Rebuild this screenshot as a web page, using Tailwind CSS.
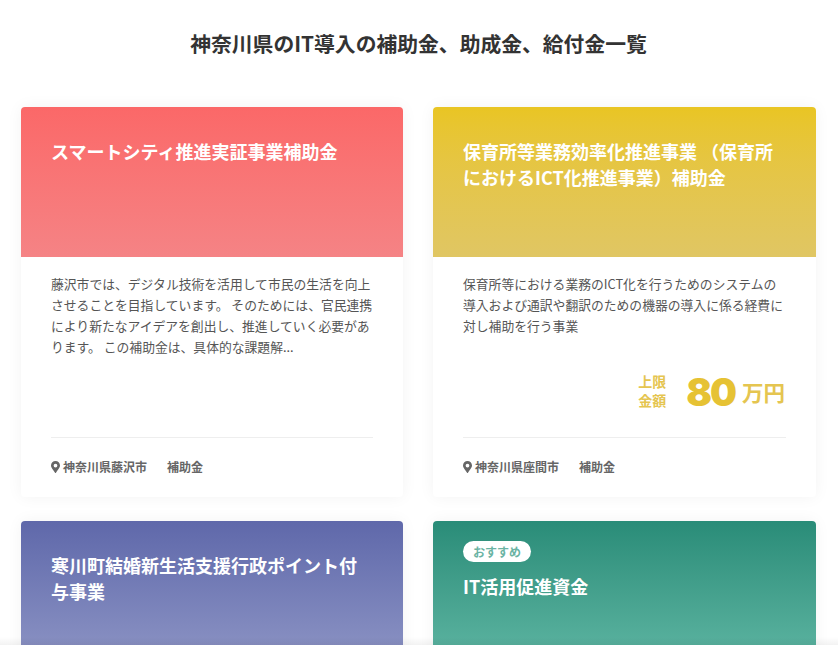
<!DOCTYPE html>
<html lang="ja">
<head>
    <meta charset="UTF-8">
    <meta name="viewport" content="width=device-width, initial-scale=1.0">
    <title>神奈川県のIT導入の補助金、助成金、給付金一覧</title>
    <script src="https://cdn.jsdelivr.net/npm/@tailwindcss/browser@4"></script>
</head>
<body class="h-[645px] overflow-hidden bg-white font-['Noto_Sans_CJK_JP','Noto_Sans',sans-serif] text-[#333]">
    <main class="relative h-[645px] overflow-hidden px-[21px]">
        <h1 class="h-[107px] pt-[28px] pr-[1px] text-center text-[20.8px] leading-[30px] font-bold">神奈川県のIT導入の補助金、助成金、給付金一覧</h1>

        <div class="grid w-[795px] grid-cols-[382px_383px] gap-x-[30px] gap-y-[24px]">
            <!-- card 1 -->
            <article class="flex h-[390px] flex-col rounded bg-white shadow-[0_0_16px_rgba(0,0,0,0.05)]">
                <div class="h-[150px] rounded-t bg-gradient-to-b from-[#fb6868] to-[#f58385] px-[30px] pt-[31px]">
                    <h2 class="text-[18px] leading-[26px] font-bold text-white">スマートシティ推進実証事業補助金</h2>
                </div>
                <div class="flex flex-1 flex-col px-[30px] pt-[16px]">
                    <p class="h-[164px] text-[12.8px] leading-[21px] text-[#555]">藤沢市では、デジタル技術を活用して市民の生活を向上させることを目指しています。 そのためには、官民連携により新たなアイデアを創出し、推進していく必要があります。 この補助金は、具体的な課題解...</p>
                    <div class="flex items-center border-t border-[#eee] pt-[19px] text-[12px] leading-[20px] font-bold text-[#666]">
                        <svg class="mr-[3px] h-[12px] w-[9px] fill-[#666]" viewBox="0 0 384 512"><path d="M172 502C27 291 0 256 0 192 0 86 86 0 192 0s192 86 192 192c0 64-27 99-172 310-10 14-30 14-40 0zm20-230a80 80 0 1 0 0-160 80 80 0 0 0 0 160z"/></svg>
                        <span>神奈川県藤沢市</span>
                        <span class="ml-[20px]">補助金</span>
                    </div>
                </div>
            </article>

            <!-- card 2 -->
            <article class="flex h-[390px] flex-col rounded bg-white shadow-[0_0_16px_rgba(0,0,0,0.05)]">
                <div class="h-[150px] rounded-t bg-gradient-to-b from-[#e9c523] to-[#e0c663] px-[30px] pt-[31px]">
                    <h2 class="text-[18px] leading-[26px] font-bold text-white">保育所等業務効率化推進事業 （保育所におけるICT化推進事業）補助金</h2>
                </div>
                <div class="flex flex-1 flex-col px-[30px] pt-[16px]">
                    <p class="h-[94px] text-[12.8px] leading-[21px] text-[#555]">保育所等における業務のICT化を行うためのシステムの導入および通訳や翻訳のための機器の導入に係る経費に対し補助を行う事業</p>
                    <div class="flex h-[70px] items-start justify-end pr-[1px] text-[#e6c234]">
                        <div class="mt-[5px] mr-[20px] text-[14px] leading-[19px] font-bold text-[#e5c550]">上限<br>金額</div>
                        <div class="mt-[6px] flex items-center">
                            <span class="font-['Inter',sans-serif] text-[38px] leading-[38px] font-black tracking-[-2px]">80</span>
                            <span class="ml-[7px] text-[21.5px] leading-[38px] font-bold text-[#e5c550]">万円</span>
                        </div>
                    </div>
                    <div class="flex items-center border-t border-[#eee] pt-[19px] text-[12px] leading-[20px] font-bold text-[#666]">
                        <svg class="mr-[3px] h-[12px] w-[9px] fill-[#666]" viewBox="0 0 384 512"><path d="M172 502C27 291 0 256 0 192 0 86 86 0 192 0s192 86 192 192c0 64-27 99-172 310-10 14-30 14-40 0zm20-230a80 80 0 1 0 0-160 80 80 0 0 0 0 160z"/></svg>
                        <span>神奈川県座間市</span>
                        <span class="ml-[20px]">補助金</span>
                    </div>
                </div>
            </article>

            <!-- card 3 -->
            <article class="flex h-[390px] flex-col rounded bg-white shadow-[0_0_16px_rgba(0,0,0,0.05)]">
                <div class="h-[150px] rounded-t bg-gradient-to-b from-[#5f68aa] to-[#9097c6] px-[30px] pt-[31px]">
                    <h2 class="text-[18px] leading-[26px] font-bold text-white">寒川町結婚新生活支援行政ポイント付与事業</h2>
                </div>
            </article>

            <!-- card 4 -->
            <article class="flex h-[390px] flex-col rounded bg-white shadow-[0_0_16px_rgba(0,0,0,0.05)]">
                <div class="h-[150px] rounded-t bg-gradient-to-b from-[#298c78] to-[#60b8a5] px-[30px] pt-[20px]">
                    <span class="block w-fit rounded-full bg-white px-[10px] text-[12px] leading-[21px] font-bold text-[#6ab3a3]">おすすめ</span>
                    <h2 class="mt-[11px] text-[18px] leading-[26px] font-bold text-white">IT活用促進資金</h2>
                </div>
            </article>
        </div>

        <!-- shadow of the bar below the window -->
        <div class="pointer-events-none absolute inset-x-0 bottom-0 h-[8px] bg-gradient-to-b from-transparent to-black/5"></div>
    </main>
</body>
</html>
